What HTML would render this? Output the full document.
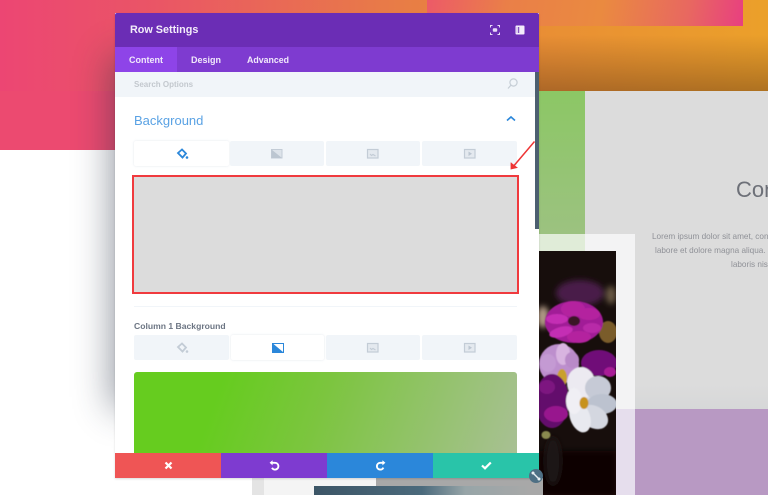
<!DOCTYPE html>
<html><head><meta charset="utf-8"><title>Row Settings</title>
<style>
html,body{margin:0;padding:0}
body{width:768px;height:495px;overflow:hidden;position:relative;background:#fff;font-family:"Liberation Sans",sans-serif}
#w{position:absolute;left:0;top:0;width:768px;height:495px;overflow:hidden;filter:blur(.3px)}
.a{position:absolute}
.tab{position:absolute;height:25px;background:#f1f5f9;border-radius:2px}
.tab.on{background:#fff;box-shadow:0 0 2px rgba(170,185,200,.35)}
.tab svg{position:absolute;left:50%;top:50%;margin:-6px 0 0 -7px}
.t{position:absolute;white-space:nowrap}
</style></head><body><div id="w">
<!-- page background -->
<div class="a" style="left:0;top:0;width:768px;height:91px;background:linear-gradient(90deg,#ec4673 0,#ea5566 20%,#e87a48 50%,#e98e35 70%,#eba02a 100%)"></div>
<div class="a" style="left:0;top:91px;width:115px;height:59px;background:#ec4a70"></div>
<div class="a" style="left:427px;top:0;width:316px;height:26px;background:linear-gradient(100deg,#ec5a68 0,#ea7f48 25%,#ea8a40 55%,#e86860 82%,#e83f80 100%)"></div>
<div class="a" style="left:539px;top:35px;width:229px;height:56px;background:linear-gradient(180deg,rgba(90,50,20,0),rgba(90,50,20,.42))"></div>
<div class="a" style="left:539px;top:91px;width:46px;height:143px;background:linear-gradient(180deg,#8cc765,#9cc280)"></div>
<div class="a" style="left:585px;top:91px;width:183px;height:318px;background:linear-gradient(180deg,#dcdcdc 0,#dcdcdc 92%,#d6d7d8 100%)"></div>
<div class="a" style="left:539px;top:234px;width:96px;height:175px;background:#f3f3f4"></div>
<div class="a" style="left:539px;top:234px;width:46px;height:17px;background:#e0ecd8"></div>
<div class="a" style="left:616px;top:409px;width:19px;height:86px;background:#e6deed"></div>
<div class="a" style="left:635px;top:409px;width:133px;height:86px;background:#b899c3"></div>
<div class="t" style="left:736px;top:177px;font-size:22px;color:#6d7078">Con</div>
<div class="t" style="left:652px;top:230px;font-size:8.2px;line-height:14px;color:#8f9197">Lorem ipsum dolor sit amet, cons</div>
<div class="t" style="left:655px;top:244px;font-size:8.2px;line-height:14px;color:#8f9197">labore et dolore magna aliqua. U</div>
<div class="t" style="left:731px;top:258px;font-size:8.2px;line-height:14px;color:#8f9197">laboris nisi</div>
<!-- flower photo -->
<svg class="a" style="left:539px;top:251px" width="77" height="244" viewBox="0 0 77 244">
<defs><filter id="b"><feGaussianBlur stdDeviation=".6"/></filter><filter id="c"><feGaussianBlur stdDeviation="3"/></filter></defs>
<rect width="77" height="244" fill="#170e0c"/>
<g filter="url(#c)">
<ellipse cx="41" cy="42" rx="24" ry="13" fill="#4a1f48"/>
<ellipse cx="4" cy="66" rx="6" ry="11" fill="#b09a85"/>
<ellipse cx="72" cy="44" rx="5" ry="9" fill="#6a5a45"/>
<rect y="200" width="77" height="44" fill="#0a0605"/>
<ellipse cx="14" cy="210" rx="8" ry="24" fill="#1f1816"/>
</g>
<g filter="url(#b)">
<ellipse cx="69" cy="81" rx="9" ry="11" fill="#7a5c2c"/>
<ellipse cx="60" cy="112" rx="18" ry="13" fill="#6f1078"/>
<ellipse cx="71" cy="121" rx="6" ry="5" fill="#a81c96"/>
<!-- pink zinnia -->
<g transform="translate(35 71)">
<ellipse cx="0" cy="0" rx="29" ry="21" fill="#a11f97"/>
<ellipse cx="-1" cy="-13" rx="12" ry="8" fill="#b4249f"/>
<ellipse cx="-17" cy="-3" rx="11" ry="5" fill="#c42fb4"/>
<ellipse cx="15" cy="-8" rx="11" ry="6" fill="#b4249f"/>
<ellipse cx="18" cy="6" rx="9" ry="5" fill="#b82aa8"/>
<ellipse cx="-13" cy="10" rx="12" ry="5" transform="rotate(-15 -13 10)" fill="#c42fb4"/>
<ellipse cx="5" cy="15" rx="12" ry="6" fill="#b4249f"/>
<ellipse cx="0" cy="-1" rx="6" ry="5" fill="#3a1528"/>
</g>
<!-- pale pink cosmos -->
<ellipse cx="20" cy="113" rx="20" ry="20" fill="#bd8fcd"/>
<ellipse cx="24" cy="103" rx="7" ry="11" fill="#d8b4e0"/>
<ellipse cx="33" cy="109" rx="7" ry="8" fill="#b98ac8"/>
<ellipse cx="9" cy="112" rx="8" ry="9" fill="#c49ad3"/>
<ellipse cx="23" cy="127" rx="5" ry="9" fill="#c9a02f"/>
<!-- magenta low -->
<ellipse cx="13" cy="150" rx="17" ry="27" fill="#64106c"/>
<ellipse cx="17" cy="163" rx="12" ry="8" fill="#98188e"/>
<ellipse cx="8" cy="136" rx="8" ry="7" fill="#7d1480"/>
<!-- white cosmos -->
<g transform="translate(41 152)">
<ellipse cx="8" cy="-2" rx="21" ry="26" fill="#d6d9e2"/>
<ellipse cx="1" cy="-20" rx="14" ry="16" fill="#eceaf1"/>
<ellipse cx="18" cy="-15" rx="13" ry="12" fill="#c6cad6"/>
<ellipse cx="22" cy="1" rx="15" ry="10" fill="#bcc2cf"/>
<ellipse cx="14" cy="14" rx="15" ry="11" transform="rotate(30 14 14)" fill="#d4d7e0"/>
<ellipse cx="0" cy="14" rx="10" ry="16" transform="rotate(-20 0 14)" fill="#e8e9ef"/>
<ellipse cx="-6" cy="-2" rx="8" ry="13" fill="#f0eff4"/>
<ellipse cx="4" cy="0" rx="4.5" ry="6" fill="#c7921c"/>
</g>
<ellipse cx="7" cy="184" rx="4.5" ry="4" fill="#8a8a50"/>
</g></svg>
<!-- strip under modal -->
<div class="a" style="left:252px;top:478px;width:291px;height:17px;background:#a8a8a8"></div>
<div class="a" style="left:252px;top:478px;width:12px;height:17px;background:#e4e4e4"></div>
<div class="a" style="left:264px;top:478px;width:112px;height:17px;background:#f4f4f4"></div>
<div class="a" style="left:314px;top:486px;width:216px;height:9px;background:linear-gradient(90deg,#3c5566,#4b6a7c 50%,#97a5a8 70%,#a8a8a8)"></div>
<!-- modal shadow, left side only -->
<div class="a" style="left:0;top:0;width:115px;height:495px;overflow:hidden">
<div class="a" style="left:115px;top:60px;width:100px;height:345px;box-shadow:0 0 34px 4px rgba(40,50,70,.48)"></div>
</div>
<!-- modal -->
<div class="a" style="left:115px;top:13px;width:424px;height:465px;background:#fff;overflow:hidden;box-shadow:0 1px 2px rgba(0,0,0,.15)">
<div class="a" style="left:0;top:0;width:424px;height:34px;background:#6b2db5;border-radius:2px 2px 0 0"></div>
<div class="t" style="left:15px;top:10px;font-size:10.8px;line-height:15px;font-weight:bold;color:#f3edfa">Row Settings</div>
<svg class="a" style="left:375px;top:12px" width="10" height="10" viewBox="0 0 10 10" fill="none" stroke="#e9ddf7" stroke-width="1"><path d="M0.5 2.5V.5H2.5M7.5 .5H9.5V2.5M9.5 7.5V9.5H7.5M2.5 9.5H.5V7.5"/><rect x="2.8" y="3.2" width="4.4" height="3.6" rx="1" fill="#e9ddf7" stroke="none"/></svg>
<svg class="a" style="left:400px;top:12px" width="10" height="10" viewBox="0 0 10 10"><rect x=".5" y=".5" width="9" height="9" rx="1" fill="#f3ecfb"/><rect x="3.2" y="2" width="1" height="6" fill="#6b2db5"/><rect x="1.5" y="2" width="1" height="6" fill="#c9b2e6"/></svg>
<div class="a" style="left:0;top:34px;width:424px;height:25px;background:#7e3bd0"></div>
<div class="a" style="left:0;top:34px;width:62px;height:25px;background:#8e44e8"></div>
<div class="t" style="left:14px;top:41px;font-size:9px;line-height:12px;font-weight:bold;color:#f1e9fb">Content</div>
<div class="t" style="left:76px;top:41px;font-size:9px;line-height:12px;font-weight:bold;color:#f1e9fb">Design</div>
<div class="t" style="left:132px;top:41px;font-size:8.8px;line-height:12px;font-weight:bold;color:#f1e9fb">Advanced</div>
<div class="a" style="left:0;top:59px;width:420px;height:25px;background:#f1f5f9"></div>
<div class="t" style="left:19px;top:66px;font-size:8px;line-height:11px;font-weight:bold;color:#c3c8ce">Search Options</div>
<svg class="a" style="left:392px;top:65px" width="11" height="12" viewBox="0 0 11 12" fill="none" stroke="#c6ced6" stroke-width="1.2"><circle cx="6.5" cy="4.5" r="3.6"/><path d="M3.8 7.3 1 10.5"/></svg>
<div class="a" style="left:420px;top:59px;width:4px;height:157px;background:#4c5f70"></div>
<div class="t" style="left:19px;top:100px;font-size:13px;line-height:16px;color:#5aa2e4">Background</div>
<svg class="a" style="left:391px;top:102px" width="10" height="7" viewBox="0 0 10 7" fill="none" stroke="#2b87da" stroke-width="1.6"><path d="M1 5.5 5 2l4 3.5"/></svg>
<div class="tab on" style="left:19px;top:128px;width:95px"><svg width="14" height="12" viewBox="0 0 14 12"><path d="M3 5 7 1.5 11 5.5 7.5 9.5Z" fill="none" stroke="#2b87da" stroke-width="1.8"/><circle cx="12" cy="9.5" r="1.3" fill="#2b87da"/></svg></div>
<div class="tab" style="left:115px;top:128px;width:94px"><svg width="14" height="12" viewBox="0 0 14 12"><rect x="1.5" y="1.5" width="10.5" height="8.5" fill="#dde3ea" stroke="#c3ccd6"/><path d="M1.5 1.5 12 10H1.5Z" fill="#bcc6d1"/></svg></div>
<div class="tab" style="left:211px;top:128px;width:94px"><svg width="14" height="12" viewBox="0 0 14 12" fill="none" stroke="#c3ccd6" stroke-width="1.2"><rect x="1.5" y="1.5" width="10.5" height="8.5" fill="#e4e9ef"/><path d="M4 6l1.5 1.5L7 6.5 9.5 8"/></svg></div>
<div class="tab" style="left:307px;top:128px;width:95px"><svg width="14" height="12" viewBox="0 0 14 12"><rect x="1.5" y="1.5" width="10.5" height="8.5" fill="#e4e9ef" stroke="#c3ccd6" stroke-width="1.2"/><path d="M5.5 3.5 9 5.8 5.5 8Z" fill="#bcc6d1"/></svg></div>
<div class="a" style="left:17px;top:162px;width:383px;height:115px;background:#dcdcdc;border:2px solid #f03a3e"></div>
<div class="a" style="left:19px;top:293px;width:383px;height:1px;background:#f1f5f9"></div>
<div class="t" style="left:19px;top:307px;font-size:8.6px;line-height:12px;font-weight:bold;color:#6c7583">Column 1 Background</div>
<div class="tab" style="left:19px;top:322px;width:95px"><svg width="14" height="12" viewBox="0 0 14 12"><path d="M3 5 7 1.5 11 5.5 7.5 9.5Z" fill="none" stroke="#c3ccd6" stroke-width="1.8"/><circle cx="12" cy="9.5" r="1.3" fill="#c3ccd6"/></svg></div>
<div class="tab on" style="left:116px;top:322px;width:93px"><svg width="14" height="12" viewBox="0 0 14 12"><rect x="1" y="1" width="12" height="10" fill="#2b87da"/><path d="M2.5 2 12 2 12 10Z" fill="#fff"/></svg></div>
<div class="tab" style="left:211px;top:322px;width:94px"><svg width="14" height="12" viewBox="0 0 14 12" fill="none" stroke="#c3ccd6" stroke-width="1.2"><rect x="1.5" y="1.5" width="10.5" height="8.5" fill="#e4e9ef"/><path d="M4 6l1.5 1.5L7 6.5 9.5 8"/></svg></div>
<div class="tab" style="left:307px;top:322px;width:95px"><svg width="14" height="12" viewBox="0 0 14 12"><rect x="1.5" y="1.5" width="10.5" height="8.5" fill="#e4e9ef" stroke="#c3ccd6" stroke-width="1.2"/><path d="M5.5 3.5 9 5.8 5.5 8Z" fill="#bcc6d1"/></svg></div>
<div class="a" style="left:19px;top:359px;width:383px;height:90px;border-radius:3px;background:linear-gradient(110deg,#66cc1f 22%,#7cc53f 48%,#a9c095 100%)"></div>
<div class="a" style="left:0;top:440px;width:106px;height:25px;background:#ef5555"></div>
<div class="a" style="left:106px;top:440px;width:106px;height:25px;background:#7e3bd0"></div>
<div class="a" style="left:212px;top:440px;width:106px;height:25px;background:#2b87da"></div>
<div class="a" style="left:318px;top:440px;width:106px;height:25px;background:#29c4a9"></div>
<svg class="a" style="left:49px;top:448px" width="9" height="9" viewBox="0 0 9 9" stroke="#fff" stroke-width="2.2"><path d="M1.5 1.5 7.5 7.5M7.5 1.5 1.5 7.5"/></svg>
<svg class="a" style="left:154px;top:447px" width="11" height="11" viewBox="0 0 11 11" fill="none" stroke="#fff" stroke-width="1.9"><path d="M3 2.8H6A3.4 3.4 0 1 1 3 7.8"/><path d="M3.6 .2V5.4L.6 2.8Z" fill="#fff" stroke="none"/></svg>
<svg class="a" style="left:260px;top:447px" width="11" height="11" viewBox="0 0 11 11" fill="none" stroke="#fff" stroke-width="1.9"><path d="M8 2.8H5A3.4 3.4 0 1 0 8.4 7.6"/><path d="M7.4 .2V5.4L10.4 2.8Z" fill="#fff" stroke="none"/></svg>
<svg class="a" style="left:366px;top:448px" width="11" height="9" viewBox="0 0 11 9" fill="none" stroke="#fff" stroke-width="2.2"><path d="M1 4.5 4 7.3 9.8 1.5"/></svg>
</div>
<!-- red arrow over modal -->
<svg class="a" style="left:505px;top:138px" width="32" height="34" viewBox="0 0 32 34" fill="none" stroke="#ee3535" stroke-width="1.5"><path d="M29.5 3.5 7 30"/><path d="M6 24.5 6 31 12.5 29.5" fill="#ee3535" stroke-width=".8"/></svg>
<!-- resize handle -->
<svg class="a" style="left:529px;top:469px" width="14" height="14" viewBox="0 0 14 14"><circle cx="7" cy="7" r="7" fill="#4e6f84"/><path d="M4 4 10 10" stroke="#e8eef2" stroke-width="1.4"/><circle cx="4" cy="4" r="1.5" fill="#e8eef2"/><circle cx="10" cy="10" r="1.5" fill="#e8eef2"/></svg>
</div></body></html>
